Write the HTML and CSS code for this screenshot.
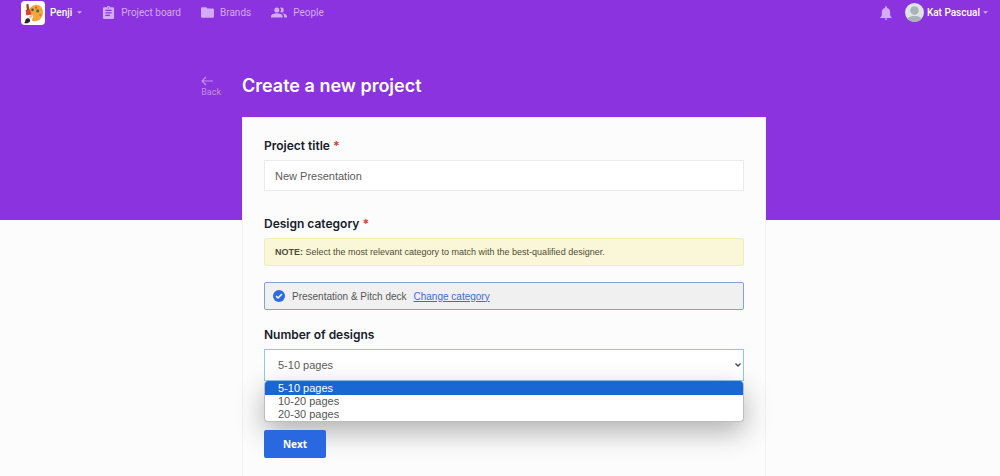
FILE: index.html
```html
<!DOCTYPE html>
<html lang="en">
<head>
<meta charset="utf-8">
<meta name="viewport" content="width=device-width, initial-scale=1">
<title>Create a new project</title>
<link rel="stylesheet" href="styles.css">
</head>
<body>
<header class="topbar">
  <nav class="nav">
    <button class="team" type="button">
      <svg class="logo" viewBox="0 0 46 46" aria-hidden="true">
        <rect width="46" height="46" rx="7" fill="#fff"/>
        <path d="M25 8c9-3 18 4 17 15-1 11-9 17-18 16-4-1-4-4-2-6 3-3 1-5-2-6-9-3-6-15 5-19z" fill="#f4a63a"/>
        <circle cx="22" cy="17" r="2.500" fill="#365f48"/>
        <circle cx="29" cy="13" r="2" fill="#d84b32"/>
        <circle cx="32" cy="19" r="3" fill="#2f7b68"/>
        <circle cx="37" cy="27" r="2" fill="#e86b2c"/>
        <path d="M10 7l4-2 3 16-5 2z" fill="#a63d24"/>
        <path d="M9 17l9 1 2 8-10 2z" fill="#d54631"/>
        <path d="M15 30l7-5 2 3-6 6z" fill="#d9c4ad"/>
        <path d="M6 42c3-2 1-7 6-9 5-1 8 5 3 8-3 2-6 2-9 1z" fill="#29252a"/>
      </svg>
      <span>Penji</span>
      <svg class="caret" viewBox="0 0 6 3" aria-hidden="true"><path d="M0 0h6L3 3z" fill="currentColor"/></svg>
    </button>
    <a class="nav-link" href="#">
      <svg class="icon" viewBox="2 1 20 21" aria-hidden="true"><path fill="currentColor" d="M19 3h-4.200C14.400 1.800 13.300 1 12 1s-2.400.8-2.800 2H5a2 2 0 0 0-2 2v15c0 1.100.9 2 2 2h14a2 2 0 0 0 2-2V5a2 2 0 0 0-2-2zm-7 0a1 1 0 1 1 0 2 1 1 0 0 1 0-2zm2 14H7v-2h7v2zm3-4H7v-2h10v2zm0-4H7V7h10v2z"/></svg>
      <span>Project board</span>
    </a>
    <a class="nav-link" href="#">
      <svg class="icon" viewBox="2 4 20 16" aria-hidden="true"><path fill="currentColor" d="M10 4H4a2 2 0 0 0-2 2v12c0 1.100.9 2 2 2h16a2 2 0 0 0 2-2V8a2 2 0 0 0-2-2h-8z"/></svg>
      <span>Brands</span>
    </a>
    <a class="nav-link" href="#">
      <svg class="icon people" viewBox="1 5 22 14" aria-hidden="true"><path fill="currentColor" d="M16.700 13.100C18 14 19 15.200 19 17v2h4v-2c0-2.200-3.600-3.500-6.300-3.900zM15 12a3.500 3.500 0 1 0 0-7c-.5 0-.9.1-1.300.2a5.500 5.500 0 0 1 0 6.600c.4.100.8.200 1.300.2zM9 12a3.500 3.500 0 1 0 0-7 3.500 3.500 0 0 0 0 7zm0 1c-2.700 0-8 1.300-8 4v2h16v-2c0-2.700-5.300-4-8-4z"/></svg>
      <span>People</span>
    </a>
  </nav>
  <div class="account">
    <button class="bell" type="button" aria-label="Notifications">
      <svg viewBox="4 2 16 20" aria-hidden="true"><path fill="currentColor" d="M12 22a2 2 0 0 0 2-2h-4c0 1.100.9 2 2 2zm6-6v-5c0-3.100-1.600-5.600-4.500-6.300V4a1.500 1.500 0 0 0-3 0v.7C7.600 5.400 6 7.900 6 11v5l-2 2v1h16v-1z"/></svg>
    </button>
    <button class="user" type="button">
      <svg class="avatar" viewBox="0 0 38 38" aria-hidden="true">
        <defs><clipPath id="face"><circle cx="19" cy="19" r="19"/></clipPath></defs>
        <g clip-path="url(#face)"><rect width="38" height="38" fill="#dfe4e6"/><circle cx="19" cy="15" r="8.500" fill="#a9b3b7"/><path d="M3 38c0-9 7-12 16-12s16 3 16 12z" fill="#a9b3b7"/></g>
      </svg>
      <span>Kat Pascual</span>
      <svg class="caret" viewBox="0 0 6 3" aria-hidden="true"><path d="M0 0h6L3 3z" fill="currentColor"/></svg>
    </button>
  </div>
</header>
<main class="page">
  <a class="back" href="#">
    <svg viewBox="0 0 12 10" aria-hidden="true"><path d="M5 1L1 5l4 4M1 5h11" fill="none" stroke="currentColor" stroke-width="1.200"/></svg>
    <span>Back</span>
  </a>
  <h1 class="title">Create a new project</h1>
  <form class="card">
    <div class="field">
      <label class="label" for="title">Project title <span class="required">*</span></label>
      <input class="input" id="title" type="text" value="New Presentation">
    </div>
    <section class="field category-field">
      <h2 class="label">Design category <span class="required">*</span></h2>
      <p class="note"><strong>NOTE:</strong> Select the most relevant category to match with the best-qualified designer.</p>
      <div class="category">
        <svg class="check" viewBox="0 0 12 12" aria-hidden="true"><circle cx="6" cy="6" r="6" fill="#2c6be0"/><path d="M3 6l2 2 4-4" fill="none" stroke="#fff" stroke-width="1.500"/></svg>
        <span>Presentation &amp; Pitch deck</span>
        <a class="change" href="#">Change category</a>
      </div>
    </section>
    <div class="field count">
      <label class="label" for="count">Number of designs</label>
      <div class="picker">
        <select class="select" id="count">
          <option>5-10 pages</option>
          <option>10-20 pages</option>
          <option>20-30 pages</option>
        </select>
        <svg class="chevron" viewBox="0 0 6 4" aria-hidden="true"><path d="M.5.5L3 3 5.500.5" fill="none" stroke="#444" stroke-width="1.300"/></svg>
        <ul class="menu" role="listbox" aria-label="Number of designs">
          <li class="option selected" role="option" aria-selected="true">5-10 pages</li>
          <li class="option" role="option">10-20 pages</li>
          <li class="option" role="option">20-30 pages</li>
        </ul>
      </div>
    </div>
    <button class="next" type="submit">Next</button>
  </form>
</main>
</body>
</html>
```
FILE: styles.css
```css
* {
  box-sizing: border-box;
}

body {
  margin: 0;
  min-height: 100vh;
  display: flex;
  flex-direction: column;
  background: #fcfcfc linear-gradient(#8a33de, #8a33de) no-repeat 0 0 / 100% 220px;
  font-family: "Liberation Sans", Arial, sans-serif;
  font-size: 11px;
  color: #555;
}

button {
  border: 0;
  padding: 0;
  background: none;
  color: inherit;
  font: inherit;
}

a {
  color: inherit;
  text-decoration: none;
}

.topbar {
  display: flex;
  justify-content: space-between;
  height: 25px;
  padding: 0 12px 0 21px;
  font-family: Roboto, sans-serif;
  font-size: 10px;
  color: #d3abf8;
}

.nav,
.account,
.team,
.user,
.nav-link {
  display: flex;
  align-items: center;
}

.nav {
  gap: 20px;
}

.account {
  gap: 13px;
}

.team,
.user {
  gap: 5px;
  color: #fff;
  font-weight: 500;
}

.user {
  gap: 3px;
}

.nav-link {
  gap: 6px;
}

.logo {
  width: 24px;
  height: 24px;
}

.caret {
  width: 5px;
  height: 3px;
  color: #d3abf8;
}

.icon {
  width: 13px;
  height: 13px;
}

.people {
  width: 16px;
}

.bell,
.bell svg {
  display: block;
  width: 12px;
  height: 14px;
}

.avatar {
  width: 19px;
  height: 19px;
}

.page {
  flex: 1;
  display: grid;
  grid-template-columns: 1fr minmax(0, 524px) 1fr;
  grid-template-rows: 92px 1fr;
  padding-left: 8px;
}

.back {
  justify-self: end;
  align-self: start;
  display: flex;
  flex-direction: column;
  gap: 1px;
  margin: 51px 21px 0 0;
  font-family: Roboto, sans-serif;
  font-size: 9px;
  line-height: 10px;
  color: #c58ff3;
}

.back svg {
  width: 12px;
  height: 10px;
}

.title {
  margin: 49px 0 0;
  font-family: Inter, sans-serif;
  font-size: 18px;
  font-weight: 600;
  line-height: 24px;
  color: #fff;
}

.card {
  grid-column: 2;
  padding: 20px 21px 16px;
  border: 1px solid #f0f0f0;
  border-bottom: 0;
  background: #fcfcfc;
}

.field {
  margin-bottom: 25px;
}

.category-field {
  margin-bottom: 17px;
}

.count {
  margin-bottom: 49px;
}

.label {
  display: block;
  margin: 0 0 6px;
  font-family: Inter, sans-serif;
  font-size: 12px;
  font-weight: 600;
  line-height: 16px;
  color: #15202b;
}

.required {
  color: #d83a34;
  font-weight: 700;
}

.input,
.select {
  display: block;
  width: 100%;
  height: 31px;
  padding: 0 10px;
  border: 1px solid #ebebeb;
  background: #fff;
  color: #5c5c5c;
  font: inherit;
}

.note {
  margin: 0 0 16px;
  padding: 6px 10px;
  border: 1px solid #f3ecb8;
  border-radius: 2px;
  background: #faf7d8;
  font-size: 9px;
  line-height: 14px;
  color: #4f4b37;
}

.category {
  display: flex;
  align-items: center;
  gap: 7px;
  height: 28px;
  padding: 0 8px;
  border: 1px solid #7fa2dc;
  border-radius: 2px;
  background: #f0f0f0;
  font-size: 10px;
}

.check {
  width: 12px;
  height: 12px;
}

.change {
  color: #3b6bd6;
  text-decoration: underline;
}

.picker {
  position: relative;
}

.select {
  appearance: none;
  height: 32px;
  padding: 0 13px;
  border-color: #8fc9e8;
}

.chevron {
  position: absolute;
  top: 14px;
  right: 3px;
  width: 6px;
  height: 4px;
}

.menu {
  position: absolute;
  top: 100%;
  left: 0;
  right: 0;
  margin: 0;
  padding: 0;
  list-style: none;
  overflow: hidden;
  border: 1px solid #bdbdbd;
  border-top: 0;
  border-radius: 4px;
  background: #fff;
  box-shadow: 0 10px 28px rgba(0, 0, 0, 0.3);
}

.option {
  padding: 0 13px;
  line-height: 13px;
}

.selected {
  line-height: 14px;
  background: #1967d2;
  color: #fff;
}

.next {
  position: relative;
  width: 62px;
  height: 28px;
  border-radius: 2px;
  background: #2968e0;
  color: #fff;
  font-family: "Open Sans", sans-serif;
  font-size: 10px;
  font-weight: 700;
}
```
